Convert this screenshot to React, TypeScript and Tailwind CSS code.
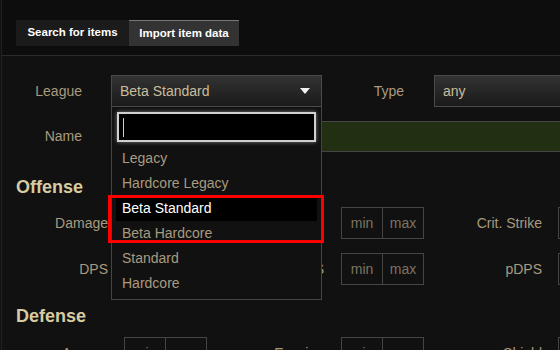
const leagues = ["Legacy", "Hardcore Legacy", "Beta Standard", "Beta Hardcore", "Standard", "Hardcore"];

function MinMax() {
  return (
    <div className="flex h-[32px] w-[83px] shrink-0 border border-[#454545] text-[14px] text-[#7d7461]">
      <div className="flex w-[41px] items-center justify-center border-r border-[#454545]">min</div>
      <div className="flex flex-1 items-center justify-center">max</div>
    </div>
  );
}

function Label({ w, text }: { w: string; text: string }) {
  return <div className={`${w} shrink-0 text-right text-[14px] text-[#a89b7e]`}>{text}</div>;
}

function SelectBox({ value, arrow }: { value: string; arrow?: boolean }) {
  return (
    <div className="flex h-[32px] w-full items-center justify-between border border-[#4a4a4a] bg-gradient-to-b from-[#333] to-[#1a1a1a] pl-[8px] pr-[11px] text-[14px] text-[#c9bd9c]">
      <span>{value}</span>
      {arrow && (
        <svg width="10" height="6" viewBox="0 0 10 6">
          <path d="M0 0h10L5 6z" fill="#f2f2f2" />
        </svg>
      )}
    </div>
  );
}

export default function App() {
  return (
    <div className="relative h-[350px] w-[560px] overflow-hidden bg-[#111] font-['Liberation_Sans',Arial,sans-serif]">
      <div className="ml-px h-full border-l border-[#222]">
        <div className="h-[56px] border-b border-[#2b2b2b] bg-[#0d0d0d] pl-[14px] pt-[20px]">
          <div className="flex h-[26px] text-[11.5px] font-bold text-white">
            <div className="flex w-[113px] items-center justify-center bg-[#1b1b1b]">Search for items</div>
            <div className="flex w-[110px] items-center justify-center border-t border-[#777] bg-[#333]">Import item data</div>
          </div>
        </div>

        <div className="mt-[19px] flex items-center">
          <Label w="w-[80px]" text="League" />
          <div className="relative ml-[29px] w-[211px] shrink-0">
            <SelectBox value="Beta Standard" arrow />
            <div className="absolute left-0 top-full z-10 h-[193px] w-[211px] border border-t-0 border-[#454545] bg-[#111]">
              <div className="mx-[5px] mt-[5px] flex h-[30px] items-center border-2 border-[#d0d0d0] bg-black pl-[4px] shadow-[0_0_4px_rgba(255,255,255,0.45)]">
                <div className="h-[19px] w-px bg-[#cfcfcf]" />
              </div>
              <div className="mt-[4px]">
                {leagues.map((l) => (
                  <div
                    key={l}
                    className={`mx-[4px] flex h-[25px] items-center pl-[6px] text-[14px] ${
                      l === "Beta Standard" ? "bg-black text-white" : "text-[#a89b80]"
                    }`}
                  >
                    {l}
                  </div>
                ))}
              </div>
            </div>
          </div>
          <Label w="w-[82px]" text="Type" />
          <div className="ml-[30px] w-[200px] shrink-0">
            <SelectBox value="any" />
          </div>
        </div>

        <div className="mt-[14px] flex items-center">
          <Label w="w-[80px]" text="Name" />
          <div className="ml-[29px] h-[31px] flex-1 border-y border-[#454545] bg-[#222f13]" />
        </div>

        <div className="mt-[25px] pl-[14px] text-[18px] font-bold leading-[20px] text-[#d8cba2]">Offense</div>

        <div className="mt-[10px] flex items-center">
          <Label w="w-[106px]" text="Damage" />
          <div className="ml-[16px]"><MinMax /></div>
          <Label w="w-[117px]" text="APS" />
          <div className="ml-[17px]"><MinMax /></div>
          <Label w="w-[118px]" text="Crit. Strike" />
          <div className="ml-[16px]"><MinMax /></div>
        </div>

        <div className="mt-[14px] flex items-center">
          <Label w="w-[106px]" text="DPS" />
          <div className="ml-[16px]"><MinMax /></div>
          <Label w="w-[117px]" text="eDPS" />
          <div className="ml-[17px]"><MinMax /></div>
          <Label w="w-[118px]" text="pDPS" />
          <div className="ml-[16px]"><MinMax /></div>
        </div>

        <div className="mt-[21px] pl-[14px] text-[18px] font-bold leading-[20px] text-[#d8cba2]">Defense</div>

        <div className="mt-[11px] flex items-center">
          <Label w="w-[106px]" text="Armour" />
          <div className="ml-[16px]"><MinMax /></div>
          <Label w="w-[117px]" text="Evasion" />
          <div className="ml-[17px]"><MinMax /></div>
          <Label w="w-[118px]" text="Shield" />
          <div className="ml-[16px]"><MinMax /></div>
        </div>
      </div>

      <div className="pointer-events-none absolute left-[108px] top-[195px] z-20 h-[48px] w-[216px] border-[3px] border-[#f00]" />
    </div>
  );
}
